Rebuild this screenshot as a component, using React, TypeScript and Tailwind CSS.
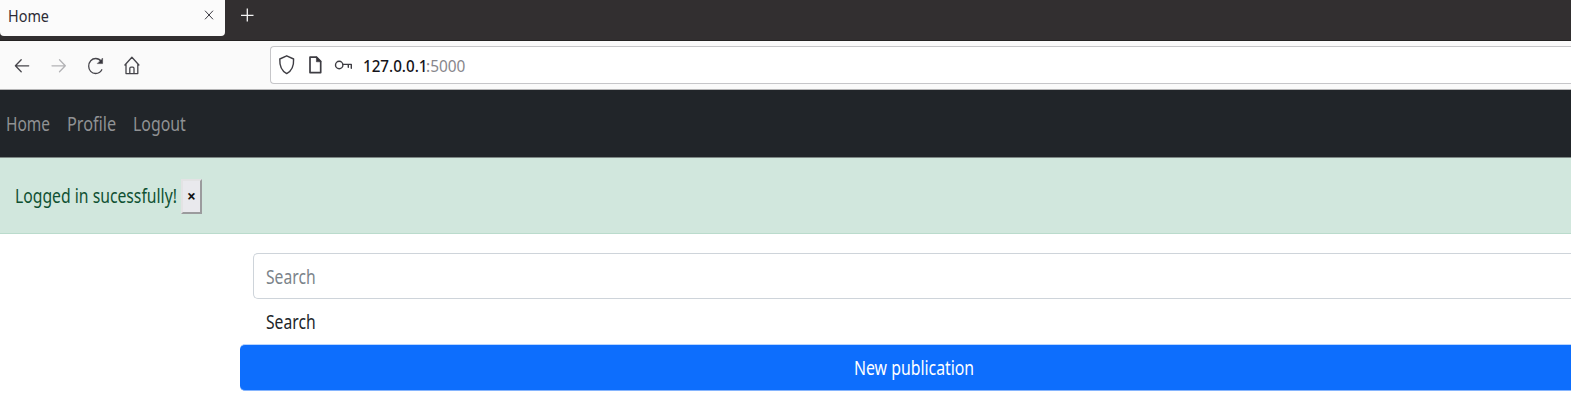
import type { ReactNode } from "react";

function Label({ width, className = "", children }: { width: string; className?: string; children: ReactNode }) {
  return (
    <span className={`flex shrink-0 whitespace-nowrap ${width}`}>
      <span className={`block origin-left ${className}`}>{children}</span>
    </span>
  );
}

function TabStrip() {
  return (
    <div className="flex h-[41px] shrink-0 items-start border-b border-[#242222] bg-[#322f30]">
      <div className="flex h-9 w-[225px] items-center rounded-b-[4px] bg-[#fbfbfb] pr-3 pb-1 pl-2">
        <Label width="w-[196px]" className="scale-x-[0.9] text-[16px] leading-6 text-[#2d2c35]">Home</Label>
        <svg width="10" height="10" viewBox="0 0 10 10" fill="none" stroke="#3b3a42" strokeWidth="1" className="mb-[3px] shrink-0">
          <path d="M1 .7 9 9.3M9 .7 1 9.3" />
        </svg>
      </div>
      <svg width="14" height="14" viewBox="0 0 14 14" fill="none" stroke="#f4f4f4" strokeWidth="1.3" className="mt-[8px] ml-[15px]">
        <path d="M7.3.5v13M1 7.3h12.5" />
      </svg>
    </div>
  );
}

function Toolbar() {
  return (
    <div className="flex h-[49px] shrink-0 items-start border-b border-[#b4b4b5] bg-[#fafafa]">
      <svg width="150" height="48" viewBox="0 41 150 48" fill="none" stroke="#46454b" strokeWidth="1.3" strokeLinecap="round" strokeLinejoin="round" className="shrink-0">
        <path d="M28.7 65.8H15.8M21.2 59.8l-5.8 6 5.8 6" />
        <path stroke="#b2b2b5" d="M52 65.8h13M59.5 59.8l5.8 6-5.8 6" />
        <path d="M101.8 69.8c-1.2 2.4-3.5 3.7-6.2 3.7-4 0-6.9-3.2-6.9-7.3 0-4.3 3-7.7 7-7.7 2.3 0 4.2 1 5.4 2.9" />
        <path fill="#38373e" strokeWidth=".6" d="M102.6 58.4v5.2h-5z" />
        <path d="m124.9 65 7-7.8 7 7.8M126 64.2v9.4h11.8v-9.4M129.8 73.4v-5q0-1.3 1.2-1.3h1.8q1.2 0 1.2 1.3v5" />
      </svg>
      <div className="mt-[5px] ml-[120px] flex h-[38px] flex-1 items-center rounded-l-[4px] border border-r-0 border-[#c6c6c9] bg-white">
        <svg width="92" height="36" viewBox="271 47 92 36" fill="none" stroke="#3e3d43" strokeWidth="1.4" strokeLinejoin="round" strokeLinecap="round" className="shrink-0">
          <path d="m286.7 55.8 6.9 3.2c.3 6.2-1.3 11.7-6.9 14.6-5.6-2.9-7.2-8.4-6.9-14.6z" />
          <path strokeWidth="1.7" d="M310 57.2h6.5l4.2 4.2v11.2H310z" />
          <path fill="#343339" strokeWidth=".6" d="M316.4 57v4.8h4.4z" />
          <circle cx="339.2" cy="65" r="3.7" />
          <path d="M343 64.4h8.3v3.9M348.3 64.4v2.8" />
        </svg>
        <Label width="w-[62.5px]" className="translate-y-px scale-x-[0.92] text-[16.5px] leading-6 font-medium text-[#15141a]">127.0.0.1</Label>
        <Label width="w-[42px]" className="translate-y-px scale-x-[0.935] text-[16.5px] leading-6 text-[#88878c]">:5000</Label>
      </div>
    </div>
  );
}

export default function App() {
  return (
    <div className="flex h-[417px] w-full flex-col overflow-hidden bg-white font-['Noto_Sans',sans-serif] text-[19.6px] leading-[30px]">
      <TabStrip />
      <Toolbar />
      <nav className="flex h-[68px] shrink-0 items-center border-b border-[#7e8885] bg-[#212529] pt-px pl-1.5 text-[#909294]">
        <Label width="w-[60.5px]" className="scale-x-[0.79]">Home</Label>
        <Label width="w-[66px]" className="scale-x-[0.83]">Profile</Label>
        <Label width="w-[60px]" className="scale-x-[0.81]">Logout</Label>
      </nav>
      <div className="flex h-[76px] shrink-0 items-center border-b border-[#badbcc] bg-[#d1e7dd] pt-px pl-[15px] text-[#0f5132]">
        <Label width="w-[166px]" className="scale-x-[0.803]">Logged in sucessfully!</Label>
        <button className="flex h-[35px] w-[21px] items-center justify-center border-2 border-t-[#e3e3e4] border-r-[#9b9b9d] border-b-[#9b9b9d] border-l-[#e3e3e4] bg-[#e9e9ed] text-[15.5px] leading-5 font-bold text-[#111]">
          ×
        </button>
      </div>
      <main className="flex flex-1 flex-col pt-[19px] pl-[240px]">
        <div className="ml-[13px] flex h-[46px] items-center rounded-l-[5px] border border-r-0 border-[#ced4da] bg-white pt-px pl-[12px] text-[#7b838a]">
          <Label width="w-[50px]" className="scale-x-[0.8]">Search</Label>
        </div>
        <div className="flex h-[45px] items-center pt-px pl-[26px] text-[#212529]">
          <Label width="w-[50px]" className="scale-x-[0.8]">Search</Label>
        </div>
        <button className="flex h-[47px] items-center rounded-l-[5px] border-y border-t-[#b9d5fe] border-b-[#86b5fe] bg-[#0d6efd] pl-[614px] text-white">
          <Label width="w-[121px]" className="scale-x-[0.807]">New publication</Label>
        </button>
      </main>
    </div>
  );
}
